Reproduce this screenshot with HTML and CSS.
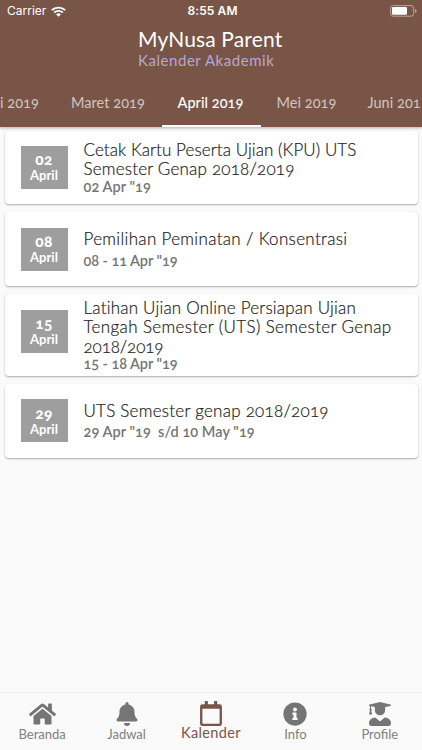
FILE: index.html
```html
<!DOCTYPE html>
<html lang="id">
<head>
<meta charset="utf-8">
<title>MyNusa Parent</title>
<link rel="stylesheet" href="styles.css">
</head>
<body>
<div class="app">
  <header class="header">
    <div class="status">
      <div class="carrier"><span>Carrier</span>
        <svg width="15" height="11" viewBox="0 0 14 11" preserveAspectRatio="none" fill="none" stroke="#fff" stroke-width="1.9"><path d="M.8 4.2a8.8 8.8 0 0 1 12.4 0M3 6.5a5.7 5.7 0 0 1 8 0"/><path d="M7 10.7 4.8 8.4a3.2 3.2 0 0 1 4.4 0z" fill="#fff" stroke="none"/></svg>
      </div>
      <div class="clock">8:55 AM</div>
      <svg class="battery" width="27" height="12" viewBox="0 0 27 12"><rect x=".6" y=".6" width="23" height="10.6" rx="2.6" fill="none" stroke="#b9a59e"/><rect x="2" y="2" width="15" height="7.8" rx="1.2" fill="#fff"/><path d="M25 4q1.6.5 1.6 2T25 8z" fill="#b9a59e"/></svg>
    </div>
    <div class="titles">
      <h1>MyNusa Parent</h1>
      <p>Kalender Akademik</p>
    </div>
    <nav class="tabs">
      <span class="tab first">i 2019</span>
      <span class="tab maret">Maret 2019</span>
      <span class="tab active">April 2019</span>
      <span class="tab mei">Mei 2019</span>
      <span class="tab juni">Juni 201</span>
    </nav>
  </header>
  <main class="list">
    <article class="card">
      <div class="badge"><b>02</b><span>April</span></div>
      <div class="body"><h2><span class="l1">Cetak Kartu Peserta Ujian (KPU) UTS</span><span class="l2">Semester Genap 2018/2019</span></h2><p class="d1">02 Apr "19</p></div>
    </article>
    <article class="card roomy">
      <div class="badge"><b>08</b><span>April</span></div>
      <div class="body"><h2><span class="l3">Pemilihan Peminatan / Konsentrasi</span></h2><p class="d2">08 - 11 Apr "19</p></div>
    </article>
    <article class="card tall">
      <div class="badge"><b>15</b><span>April</span></div>
      <div class="body"><h2><span class="l4">Latihan Ujian Online Persiapan Ujian</span><span class="l5">Tengah Semester (UTS) Semester Genap</span><span class="l6">2018/2019</span></h2><p class="d3">15 - 18 Apr "19</p></div>
    </article>
    <article class="card roomy">
      <div class="badge"><b>29</b><span>April</span></div>
      <div class="body"><h2><span class="l7">UTS Semester genap 2018/2019</span></h2><p class="d4">29 Apr "19&nbsp; s/d 10 May "19</p></div>
    </article>
  </main>
  <nav class="bottom">
    <div class="item beranda"><svg width="27" height="24" viewBox="0 0 576 512"><path d="M280 148 96 300v164a16 16 0 0 0 16 16h112a16 16 0 0 0 16-16v-96a16 16 0 0 1 16-16h64a16 16 0 0 1 16 16v96a16 16 0 0 0 16 16h112a16 16 0 0 0 16-16V300L296 148a12 12 0 0 0-16 0zM572 251l-84-69V44a12 12 0 0 0-12-12h-56a12 12 0 0 0-12 12v73l-90-74a48 48 0 0 0-61 0L4 251a12 12 0 0 0-2 17l26 31a12 12 0 0 0 17 2L280 107a12 12 0 0 1 16 0l235 194a12 12 0 0 0 17-2l26-31a12 12 0 0 0-2-17z"/></svg><span>Beranda</span></div>
    <div class="item jadwal"><svg width="22" height="24" viewBox="0 0 448 512"><path d="M224 512a64 64 0 0 0 64-64H160a64 64 0 0 0 64 64zM439 362c-19-21-55-52-55-154 0-78-54-140-128-155V32a32 32 0 0 0-64 0v21C118 68 64 130 64 208c0 102-36 133-55 154A31 31 0 0 0 0 384c0 16 13 32 32 32h384c19 0 32-16 32-32a31 31 0 0 0-9-22z"/></svg><span>Jadwal</span></div>
    <div class="item kalender"><svg width="22" height="25" viewBox="0 0 448 512"><path d="M400 64h-48V12a12 12 0 0 0-12-12h-40a12 12 0 0 0-12 12v52H160V12a12 12 0 0 0-12-12h-40a12 12 0 0 0-12 12v52H48a48 48 0 0 0-48 48v352a48 48 0 0 0 48 48h352a48 48 0 0 0 48-48V112a48 48 0 0 0-48-48zm-6 400H54a6 6 0 0 1-6-6V160h352v298a6 6 0 0 1-6 6z"/></svg><span>Kalender</span></div>
    <div class="item info"><svg width="24" height="24" viewBox="0 0 512 512"><path d="M256 8a248 248 0 1 0 0 496 248 248 0 0 0 0-496zm0 110a42 42 0 1 1 0 84 42 42 0 0 1 0-84zm56 254a12 12 0 0 1-12 12h-88a12 12 0 0 1-12-12v-24a12 12 0 0 1 12-12h12v-64h-12a12 12 0 0 1-12-12v-24a12 12 0 0 1 12-12h64a12 12 0 0 1 12 12v100h12a12 12 0 0 1 12 12z"/></svg><span>Info</span></div>
    <div class="item profile"><svg width="22" height="24" viewBox="0 0 448 512" preserveAspectRatio="none"><path d="m319 330-95 86-95-86C57 333 0 382 0 454v10a48 48 0 0 0 48 48h352a48 48 0 0 0 48-48v-10c0-72-57-121-129-124zM13 84l7 1v60a25 25 0 0 0-1 43L3 250c-2 7 2 14 7 14h44c5 0 9-7 7-14l-16-62a25 25 0 0 0-1-43V90l75 18v67a105 110 0 1 0 210 0v-67l106-25c18-4 18-28 0-32L244 3a88 88 0 0 0-40 0L13 51c-17 4-17 29 0 33z"/></svg><span>Profile</span></div>
  </nav>
</div>
</body>
</html>
```
FILE: styles.css
```css
* { box-sizing: border-box; }
body { margin: 0; background: #fafafa; font-family: Lato, "Open Sans", sans-serif; font-variant-numeric: oldstyle-nums; }
h1, h2, p { margin: 0; font-weight: 400; }
.app { width: 422px; height: 750px; display: flex; flex-direction: column; overflow: hidden; }
.header { height: 126.5px; flex: none; background: #795548; color: #fff; box-shadow: 0 1px 3px rgba(0,0,0,.3); z-index: 1; display: flex; flex-direction: column; }
.status { height: 22px; display: grid; grid-template-columns: 1fr auto 1fr; align-items: center; padding: 0 5px 0 7px; font: 12px/22px Inter, sans-serif; }
.carrier { display: flex; align-items: center; gap: 5px; }
.clock { font-weight: 600; padding-left: 1px; letter-spacing: .1px; }
.battery { justify-self: end; }
.titles { height: 54px; padding-left: 138px; white-space: nowrap; padding-top: 4px; }
h1 { font-size: 21px; line-height: 25px; letter-spacing: .15px; }
.titles p { font-size: 15px; line-height: 18px; letter-spacing: .55px; color: #b8a7d5; }
.tabs { flex: 1; display: flex; white-space: nowrap; font-size: 14.5px; line-height: 20px; letter-spacing: .05px; color: #d2c4bf; }
.tab { flex: none; padding-top: 17px; }
.first { width: 55px; }
.maret { width: 106.5px; padding-left: 16px; }
.active { width: 99px; padding-left: 16px; color: #fff; font-weight: 500; border-bottom: 2.5px solid #fff; }
.mei { width: 91px; padding-left: 16px; }
.juni { padding-left: 16px; }
.list { flex: 1; padding: 4px 4.5px 0; display: flex; flex-direction: column; gap: 8px; }
.card { height: 73.7px; background: #fff; border-radius: 4px; box-shadow: 0 1px 2px rgba(0,0,0,.32); display: flex; align-items: center; padding-left: 16px; gap: 16px; }
.tall { height: 82px; }
.badge { width: 47px; height: 43px; background: #9e9e9e; color: #fff; display: flex; flex-direction: column; align-items: center; justify-content: center; font-weight: 700; }
.tall .badge { margin-bottom: 7px; }
.badge b { font-size: 15.5px; line-height: 16px; letter-spacing: .3px; }
.badge span { font-size: 13px; line-height: 16px; }
.body { white-space: nowrap; }
h2 { font-size: 17px; line-height: 19.5px; font-weight: 300; color: #222; -webkit-text-stroke: .2px #222; }
h2 span { display: block; width: max-content; }
.l1 { letter-spacing: .08px; }
.l2 { letter-spacing: .2px; }
.l3 { letter-spacing: .33px; }
.l4 { letter-spacing: .21px; }
.l5 { letter-spacing: .37px; }
.l6 { letter-spacing: -.1px; }
.l7 { letter-spacing: .25px; }
.body p { font-size: 14.5px; line-height: 16px; font-weight: 600; color: #757575; width: max-content; letter-spacing: .05px; }
.body .d2, .body .d3 { letter-spacing: -.07px; }
.roomy .body p { margin-top: 4px; }
.bottom { height: 58.5px; border-top: 1px solid #eee; display: grid; grid-template-columns: repeat(5, 1fr); background: #fafafa; color: #808080; fill: #757575; font-size: 13px; }
.item { display: flex; flex-direction: column; align-items: center; padding-top: 9.5px; line-height: 17px; }
.kalender { color: #795548; fill: #795548; font-size: 14.5px; letter-spacing: .35px; padding-top: 8px; line-height: 14px; }
```
